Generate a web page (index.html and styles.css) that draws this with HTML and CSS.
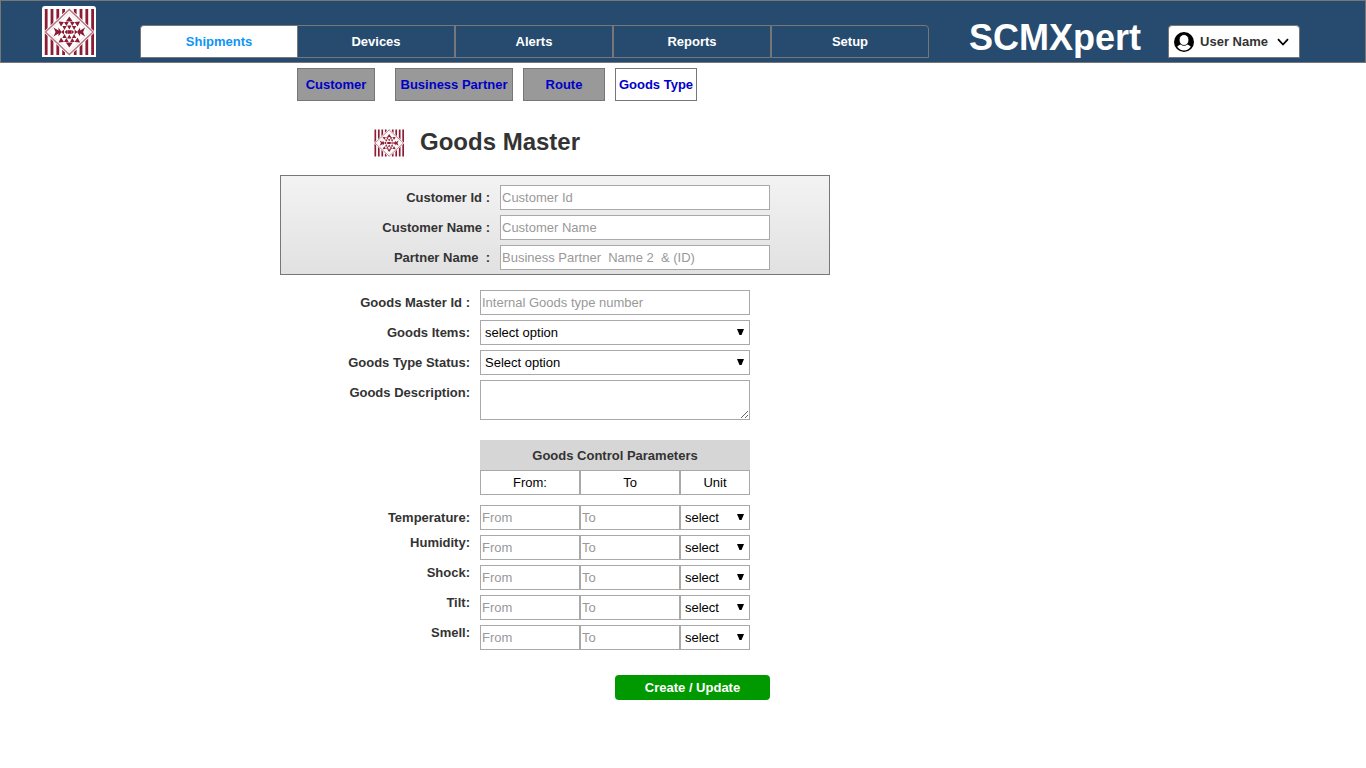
FILE: index.html
```html
<!DOCTYPE html>
<html lang="en">
<head>
<meta charset="utf-8">
<title>SCMXpert - Goods Master</title>
<link rel="stylesheet" href="styles.css">
</head>
<body>
<svg class="defs" aria-hidden="true">
  <g id="emblem">
    <path d="M4.200 3v46M10 3v46M15.800 3v46M21.600 3v46M27.400 3v46M33.200 3v46M39 3v46M44.800 3v46M50.600 3v46" stroke="#8c1c33" stroke-width="2.800"/>
    <path d="M27.300 1.500 53 26 27.300 50.500 1.500 26z" fill="#fff"/>
    <path d="M27.300 3.500 51 26 27.300 48.500 3.500 26z" fill="#fff" stroke="#b77582" stroke-width="1.500"/>
    <path d="M27.300 6.800 47.600 26 27.300 45.200 7 26z" fill="none" stroke="#ecd6da" stroke-width=".8"/>
    <g fill="#8c1c33">
      <path d="m27.300 10.500 3.500 5h-7zM27.300 41.500l3.500-5h-7z"/>
      <path d="m11.500 21.500 5 3v-3l3 4.500-3 4.500v-3l-5 3 2-4.500zM43.100 21.500l-5 3v-3l-3 4.500 3 4.500v-3l5 3-2-4.500z"/>
      <path d="m16.500 15.500 5.500.5-3 4.500zM38.100 15.500l-5.500.5 3 4.500zM16.500 36.500l5.500-.5-3-4.500zM38.100 36.500l-5.500-.5 3-4.500z"/>
      <path d="M22 16h4.700l-2.300 4zM28 16h4.700l-2.400 4zM22 36h4.700l-2.300-4zM28 36h4.700l-2.400-4z"/>
      <path d="M20.300 20h4.400l-2.200 4zM25.100 19.500h4.400l-2.200 4zM29.900 20h4.400l-2.200 4zM20.300 32h4.400l-2.200-4zM25.100 32.500h4.400l-2.200-4zM29.900 32h4.400l-2.200-4z"/>
      <path d="m19 26 3-2.500v5zM22.500 26l2.500-2.200v4.400zM25.300 24.200h4v3.600h-4zM32.100 26l-2.500-2.200v4.400zM35.600 26l-3-2.500v5z"/>
    </g>
  </g>
</svg>

<header class="topbar">
  <svg class="logo" viewBox="0 0 54 51" role="img" aria-label="Company emblem"><use href="#emblem"/></svg>
  <nav class="tabs" aria-label="Main">
    <a class="tab tab-active" href="#shipments">Shipments</a>
    <a class="tab" href="#devices">Devices</a>
    <a class="tab" href="#alerts">Alerts</a>
    <a class="tab" href="#reports">Reports</a>
    <a class="tab" href="#setup">Setup</a>
  </nav>
  <div class="brand">SCMXpert</div>
  <button class="user" type="button">
    <svg class="user-icon" viewBox="0 0 20 20" aria-hidden="true">
      <circle cx="10" cy="10" r="10"/>
      <path d="M3.200 14.800c1.300-1.500 3-2.200 4.800-2.500h4c1.800.3 3.500 1 4.800 2.500A8.600 8.600 0 0 1 10 18.600a8.600 8.600 0 0 1-6.800-3.800z" fill="#fff"/>
      <ellipse cx="10" cy="8" rx="4.900" ry="5.500" fill="#fff" stroke="#000" stroke-width=".8"/>
    </svg>
    <span>User Name</span>
    <svg class="chevron" viewBox="0 0 12 8" aria-hidden="true"><path d="M1 1.200 6 6.500 11 1.200" fill="none" stroke="#000" stroke-width="1.800"/></svg>
  </button>
</header>

<nav class="subtabs" aria-label="Setup">
  <a class="subtab subtab-customer" href="#customer">Customer</a>
  <a class="subtab subtab-partner" href="#partner">Business Partner</a>
  <a class="subtab" href="#route">Route</a>
  <a class="subtab subtab-active" href="#goods">Goods Type</a>
</nav>

<main class="content">
  <div class="heading">
    <svg class="heading-icon" viewBox="2 2 50 48" preserveAspectRatio="none" aria-hidden="true"><use href="#emblem"/></svg>
    <h1>Goods Master</h1>
  </div>
  <form>
    <div class="fields panel">
      <label for="cid">Customer Id :</label><input id="cid" class="control" type="text" placeholder="Customer Id">
      <label for="cname">Customer Name :</label><input id="cname" class="control" type="text" placeholder="Customer Name">
      <label for="pname">Partner Name &nbsp;:</label><input id="pname" class="control" type="text" placeholder="Business Partner &nbsp;Name 2 &nbsp;&amp; (ID)">
    </div>
    <div class="fields details">
      <label for="gid">Goods Master Id :</label><input id="gid" class="control" type="text" placeholder="Internal Goods type number">
      <label for="items">Goods Items:</label><select id="items" class="control"><option>select option</option></select>
      <label for="status">Goods Type Status:</label><select id="status" class="control"><option>Select option</option></select>
      <label for="desc">Goods Description:</label><textarea id="desc" class="control"></textarea>
    </div>
    <table class="params">
      <colgroup><col class="col-label"><col class="col-range"><col class="col-range"><col class="col-unit"></colgroup>
      <thead>
        <tr><td></td><th class="params-title" colspan="3">Goods Control Parameters</th></tr>
        <tr><td></td><th class="params-head">From:</th><th class="params-head">To</th><th class="params-head">Unit</th></tr>
      </thead>
      <tbody>
        <tr><th scope="row">Temperature:</th><td><input class="control" type="text" placeholder="From" aria-label="Temperature from"></td><td><input class="control" type="text" placeholder="To" aria-label="Temperature to"></td><td><select class="control" aria-label="Temperature unit"><option>select</option></select></td></tr>
        <tr><th scope="row">Humidity:</th><td><input class="control" type="text" placeholder="From" aria-label="Humidity from"></td><td><input class="control" type="text" placeholder="To" aria-label="Humidity to"></td><td><select class="control" aria-label="Humidity unit"><option>select</option></select></td></tr>
        <tr><th scope="row">Shock:</th><td><input class="control" type="text" placeholder="From" aria-label="Shock from"></td><td><input class="control" type="text" placeholder="To" aria-label="Shock to"></td><td><select class="control" aria-label="Shock unit"><option>select</option></select></td></tr>
        <tr><th scope="row">Tilt:</th><td><input class="control" type="text" placeholder="From" aria-label="Tilt from"></td><td><input class="control" type="text" placeholder="To" aria-label="Tilt to"></td><td><select class="control" aria-label="Tilt unit"><option>select</option></select></td></tr>
        <tr><th scope="row">Smell:</th><td><input class="control" type="text" placeholder="From" aria-label="Smell from"></td><td><input class="control" type="text" placeholder="To" aria-label="Smell to"></td><td><select class="control" aria-label="Smell unit"><option>select</option></select></td></tr>
      </tbody>
    </table>
    <div class="actions"><button class="submit" type="submit">Create / Update</button></div>
  </form>
</main>
</body>
</html>
```

FILE: styles.css
```css
* {
  box-sizing: border-box;
}

body {
  margin: 0;
  background: #fff;
  color: #333;
  font-family: "Liberation Sans", Arial, sans-serif;
  font-size: 13px;
}

a {
  text-decoration: none;
}

.defs {
  display: none;
}

/* Header */
.topbar {
  display: flex;
  align-items: flex-end;
  padding: 5px 0 4px 41px;
  border: 1px solid #777;
  background: #274b6f;
}

.logo {
  width: 54px;
  height: 51px;
  margin-bottom: 1px;
  border-radius: 3px 3px 0 0;
  background: #fff;
}

.tabs {
  display: flex;
  margin-left: 44px;
}

.tab {
  width: 158px;
  border: 1px solid #777;
  color: #fff;
  font-weight: bold;
  line-height: 31px;
  text-align: center;
}

.tab:first-child {
  border-right: 0;
  border-top-left-radius: 4px;
}

.tab:last-child {
  border-top-right-radius: 4px;
}

.tab-active {
  width: 157px;
  background: #fff;
  color: #0f94f7;
}

.brand {
  margin-left: 40px;
  color: #fff;
  font-size: 36px;
  font-weight: bold;
  line-height: 41px;
}

.user {
  display: flex;
  align-items: center;
  width: 132px;
  height: 33px;
  margin-left: 27px;
  padding: 0 5px;
  border: 1px solid #777;
  border-radius: 4px 4px 0 0;
  background: #fff;
  color: #333;
  font: bold 13px "Liberation Sans", Arial, sans-serif;
}

.user-icon {
  width: 20px;
  height: 20px;
  margin-right: 6px;
}

.chevron {
  width: 12px;
  height: 8px;
  margin-left: 9px;
}

/* Second-level navigation */
.subtabs {
  display: flex;
  gap: 10px;
  padding: 5px 0 0 297px;
}

.subtab {
  width: 82px;
  border: 1px solid #777;
  background: #999;
  color: #0000c8;
  font-weight: bold;
  line-height: 31px;
  text-align: center;
  white-space: nowrap;
}

.subtab-customer {
  width: 78px;
  margin-right: 10px;
}

.subtab-partner {
  width: 118px;
}

.subtab-active {
  background: #fff;
}

/* Form */
.content {
  max-width: 830px;
  padding-left: 280px;
}

.heading {
  display: flex;
  align-items: flex-start;
  gap: 16px;
  padding: 27px 0 18px 94px;
}

.heading-icon {
  width: 30px;
  height: 28px;
  margin-top: 1px;
}

h1 {
  margin: 0;
  font-size: 24px;
  line-height: 28px;
}

.fields {
  display: grid;
  gap: 5px 10px;
  font-weight: bold;
  line-height: 25px;
}

.fields label {
  text-align: right;
}

.panel {
  grid-template-columns: 209px 270px;
  padding: 9px 0 4px;
  border: 1px solid #777;
  background: linear-gradient(#f3f3f3, #e1e1e1);
}

.details {
  grid-template-columns: 190px 270px;
  padding: 15px 0 20px;
}

.control {
  display: block;
  width: 100%;
  height: 25px;
  margin: 0;
  padding: 1px;
  border: 1px solid #a9a9a9;
  border-radius: 0;
  background-color: #fff;
  color: #000;
  font: 13px "Liberation Sans", Arial, sans-serif;
}

.control::placeholder {
  color: #999;
  opacity: 1;
}

select.control {
  appearance: none;
  padding: 1px 4px;
  background-image: url("data:image/svg+xml,%3Csvg xmlns='http://www.w3.org/2000/svg' width='7' height='6'%3E%3Cpath d='M0 0h7L4.500 6h-2z'/%3E%3C/svg%3E");
  background-position: right 5px top 8px;
  background-repeat: no-repeat;
}

textarea.control {
  height: 40px;
}

.params {
  width: 470px;
  border-spacing: 0;
  table-layout: fixed;
}

.col-label {
  width: 200px;
}

.col-range {
  width: 100px;
}

.col-unit {
  width: 70px;
}

.params th,
.params td {
  padding: 0;
}

.params .params-title {
  padding-top: 1px;
  background: #d6d6d6;
  line-height: 29px;
}

.params .params-head {
  border: 1px solid #a9a9a9;
  color: #000;
  font-weight: normal;
  line-height: 23px;
}

.params tbody th {
  padding: 5px 10px 0 0;
  line-height: 15px;
  text-align: right;
  vertical-align: top;
}

.params tbody td {
  padding-top: 5px;
}

.params tbody tr:first-child th {
  padding-top: 10px;
  line-height: 25px;
}

.params tbody tr:first-child td {
  padding-top: 10px;
}

.actions {
  display: flex;
  justify-content: flex-end;
  padding: 25px 60px 20px 0;
}

.submit {
  width: 155px;
  height: 25px;
  padding: 0;
  border: 0;
  border-radius: 4px;
  background: #090;
  color: #fff;
  font: bold 13px "Liberation Sans", Arial, sans-serif;
}
```
